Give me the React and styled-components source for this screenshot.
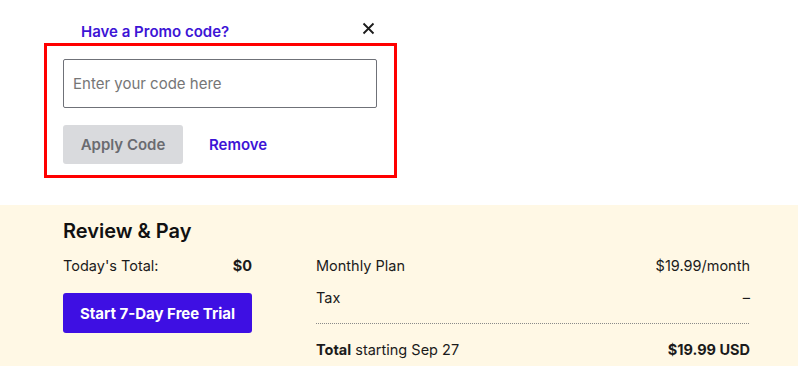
import React from 'react'
import styled, { createGlobalStyle } from 'styled-components'

const GlobalStyle = createGlobalStyle`
  body {
    margin: 0;
    background: #fff;
    font-family: Inter, "Liberation Sans", sans-serif;
    color: #111;
  }
`

const App = () => {
  return (
    <Page>
      <GlobalStyle />
      <Promo>
        <PromoHeader>
          <PromoTitle>Have a Promo code?</PromoTitle>
          <CloseButton aria-label="close">
            <svg width="13" height="13" viewBox="0 0 13 13">
              <path d="M1.5 1.5 L11.5 11.5 M11.5 1.5 L1.5 11.5" stroke="#1b1b1b" strokeWidth="1.8" />
            </svg>
          </CloseButton>
        </PromoHeader>
        <PromoBox>
          <CodeInput placeholder="Enter your code here" />
          <Actions>
            <ApplyButton>Apply Code</ApplyButton>
            <LinkButton>Remove</LinkButton>
          </Actions>
        </PromoBox>
      </Promo>
      <Review>
        <Heading>Review &amp; Pay</Heading>
        <Columns>
          <LeftCol>
            <Row>
              <Label>Today's Total:</Label>
              <Value bold>$0</Value>
            </Row>
            <TrialButton>Start 7-Day Free Trial</TrialButton>
          </LeftCol>
          <RightCol>
            <Row>
              <Label>Monthly Plan</Label>
              <Value>$19.99/month</Value>
            </Row>
            <Row>
              <Label>Tax</Label>
              <Value>–</Value>
            </Row>
            <Dots />
            <Row>
              <Label><b>Total</b> starting Sep 27</Label>
              <Value bold>$19.99 USD</Value>
            </Row>
          </RightCol>
        </Columns>
      </Review>
    </Page>
  )
}

export default App

const Page = styled.div`
  width: 798px;
  height: 366px;
  overflow: hidden;
  display: flex;
  flex-direction: column;
`

const Promo = styled.div`
  width: 353px;
  margin-left: 44px;
  padding-top: 19px;
`

const PromoHeader = styled.div`
  display: flex;
  justify-content: space-between;
  align-items: center;
  padding-left: 37px;
  padding-right: 22px;
  height: 22px;
  margin-bottom: 2px;
`

const PromoTitle = styled.div`
  color: #3d14d6;
  font-size: 15px;
  font-weight: 600;
  margin-top: 2px;
`

const CloseButton = styled.button`
  border: none;
  background: none;
  padding: 0;
  display: flex;
  margin-top: -4px;
`

const PromoBox = styled.div`
  border: 3px solid #ff0000;
  padding: 13px 17px 11px 16px;
  display: flex;
  flex-direction: column;
  gap: 17px;
`

const CodeInput = styled.input`
  box-sizing: border-box;
  width: 314px;
  height: 49px;
  border: 1px solid #6f7178;
  border-radius: 2px;
  padding: 0 9px;
  font-family: Inter, "Liberation Sans", sans-serif;
  font-size: 15px;
  color: #111;
  &::placeholder {
    color: #767676;
  }
`

const Actions = styled.div`
  display: flex;
  align-items: center;
  gap: 26px;
`

const ApplyButton = styled.button`
  width: 120px;
  height: 39px;
  border: none;
  border-radius: 3px;
  background: #d9dadd;
  color: #6a6b70;
  font-family: Inter, "Liberation Sans", sans-serif;
  font-size: 15px;
  font-weight: 600;
`

const LinkButton = styled.button`
  border: none;
  background: none;
  padding: 0;
  color: #3d14d6;
  font-family: Inter, "Liberation Sans", sans-serif;
  font-size: 15px;
  font-weight: 600;
`

const Review = styled.div`
  margin-top: 27px;
  flex: 1;
  background: #fff8e5;
  padding: 14px 48px 0 63px;
`

const Heading = styled.div`
  font-size: 20px;
  font-weight: 600;
  color: #111;
  line-height: 24px;
`

const Columns = styled.div`
  display: flex;
  gap: 64px;
  margin-top: 6px;
`

const LeftCol = styled.div`
  width: 189px;
  display: flex;
  flex-direction: column;
  gap: 12px;
`

const RightCol = styled.div`
  flex: 1;
  display: flex;
  flex-direction: column;
`

const Row = styled.div`
  display: flex;
  justify-content: space-between;
  align-items: center;
  height: 32px;
`

const Label = styled.div`
  font-size: 14.5px;
  color: #1b1b1b;
  b {
    font-weight: 700;
  }
`

const Value = styled.div`
  font-size: 14.5px;
  color: #1b1b1b;
  font-weight: ${p => (p.bold ? 700 : 400)};
`

const TrialButton = styled.button`
  height: 40px;
  border: none;
  border-radius: 3px;
  background: #3e0fe3;
  color: #fff;
  font-family: Inter, "Liberation Sans", sans-serif;
  font-size: 15px;
  font-weight: 700;
`

const Dots = styled.div`
  height: 1px;
  background: repeating-linear-gradient(to right, #8a8a8a 0 1px, transparent 1px 2px);
  margin: 10px 0 9px;
`
